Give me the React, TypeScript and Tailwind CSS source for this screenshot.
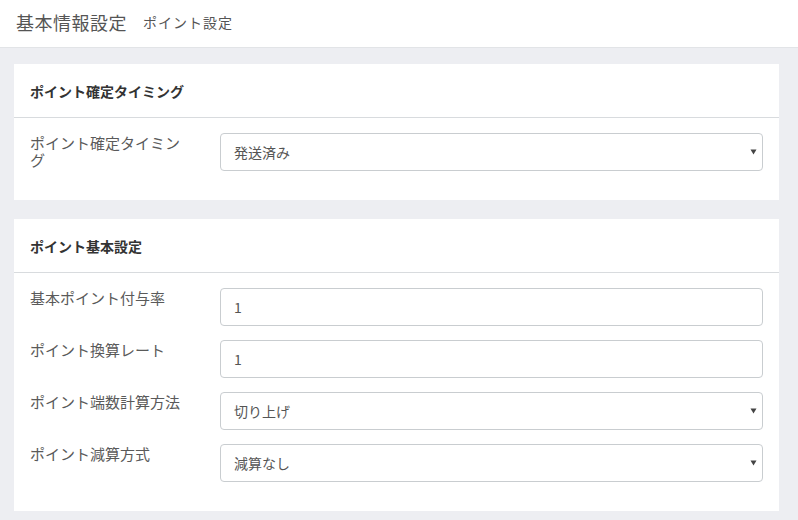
import React from "react";

const font = "font-['Noto_Sans_CJK_JP',sans-serif]";

const Arrow = () => (
    <svg width="7" height="6" viewBox="0 0 7 6" className="absolute right-[5px] top-1/2 -translate-y-1/2">
        <path d="M0.5 0.5 H6.5 L3.5 5.5 Z" fill="#444" />
    </svg>
);

const Field = ({ label, value, select }: { label: string; value: string; select?: boolean }) => (
    <div className="flex">
        <label className="w-[160px] shrink-0 pt-[1px] text-[15px] leading-[17px] text-[#5a5a5a]">{label}</label>
        <div className="relative ml-[30px] flex h-[38px] flex-1 items-center rounded-[4px] border border-[#c9cdd0] bg-white pl-[13px] text-[14px] text-[#555]">
            {value}
            {select && <Arrow />}
        </div>
    </div>
);

const Card = ({ title, children }: { title: string; children: React.ReactNode }) => (
    <div className="bg-white">
        <div className="flex h-[54px] items-center border-b border-[#d8dbde] px-[16px] pt-[1px] text-[14px] font-bold text-[#333]">
            {title}
        </div>
        <div className="px-[16px] pb-[29px] pt-[15px]">{children}</div>
    </div>
);

export default function App() {
    return (
        <div className={`${font} min-h-[520px] bg-[#edeef2]`}>
            <div className="flex h-[48px] items-center gap-[16px] border-b border-[#e2e4e7] bg-white px-[16px] pb-[2px] text-[#555]">
                <span className="text-[18px] tracking-[0.5px]">基本情報設定</span>
                <span className="text-[14px] tracking-[1px]">ポイント設定</span>
            </div>
            <div className="flex flex-col gap-[19px] pl-[14px] pr-[19px] pt-[16px]">
                <Card title="ポイント確定タイミング">
                    <Field label="ポイント確定タイミング" value="発送済み" select />
                </Card>
                <Card title="ポイント基本設定">
                    <div className="flex flex-col gap-[14px]">
                        <Field label="基本ポイント付与率" value="1" />
                        <Field label="ポイント換算レート" value="1" />
                        <Field label="ポイント端数計算方法" value="切り上げ" select />
                        <Field label="ポイント減算方式" value="減算なし" select />
                    </div>
                </Card>
            </div>
        </div>
    );
}
